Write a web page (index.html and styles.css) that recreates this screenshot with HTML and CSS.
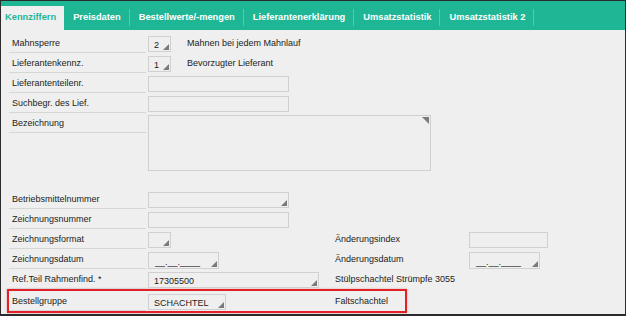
FILE: index.html
```html
<!DOCTYPE html>
<html lang="de">
<head>
    <meta charset="UTF-8">
    <title>Kennziffern</title>
    <link rel="stylesheet" href="styles.css">
</head>
<body>
    <div class="frame">
        <!-- Reiter -->
        <div class="tabs">
            <div class="tab active">Kennziffern</div>
            <div class="tab">Preisdaten</div>
            <div class="tab">Bestellwerte/-mengen</div>
            <div class="tab">Lieferantenerklärung</div>
            <div class="tab">Umsatzstatistik</div>
            <div class="tab">Umsatzstatistik 2</div>
        </div>

        <!-- Formular -->
        <div class="form">
            <div class="row">
                <div class="lbl">Mahnsperre</div>
                <div class="fld">
                    <div class="box sel w-xs">2</div>
                    <span class="txt">Mahnen bei jedem Mahnlauf</span>
                </div>
            </div>
            <div class="row">
                <div class="lbl">Lieferantenkennz.</div>
                <div class="fld">
                    <div class="box sel w-xs">1</div>
                    <span class="txt">Bevorzugter Lieferant</span>
                </div>
            </div>
            <div class="row">
                <div class="lbl">Lieferantenteilenr.</div>
                <div class="fld"><div class="box w-md"></div></div>
            </div>
            <div class="row">
                <div class="lbl">Suchbegr. des Lief.</div>
                <div class="fld"><div class="box w-md"></div></div>
            </div>
            <div class="row tall">
                <div class="lbl">Bezeichnung</div>
                <div class="fld"><div class="box area"></div></div>
            </div>
            <div class="row">
                <div class="lbl">Betriebsmittelnummer</div>
                <div class="fld"><div class="box sel w-md"></div></div>
            </div>
            <div class="row">
                <div class="lbl">Zeichnungsnummer</div>
                <div class="fld"><div class="box w-md"></div></div>
            </div>
            <div class="row">
                <div class="lbl">Zeichnungsformat</div>
                <div class="fld"><div class="box sel w-xs"></div></div>
                <div class="rlbl">Änderungsindex</div>
                <div class="rfld"><div class="box w-idx"></div></div>
            </div>
            <div class="row">
                <div class="lbl">Zeichnungsdatum</div>
                <div class="fld"><div class="box sel date w-date">__.__.____</div></div>
                <div class="rlbl">Änderungsdatum</div>
                <div class="rfld"><div class="box sel date w-date">__.__.____</div></div>
            </div>
            <div class="row">
                <div class="lbl">Ref.Teil Rahmenfind. *</div>
                <div class="fld"><div class="box sel w-lg">17305500</div></div>
                <div class="rtxt">Stülpschachtel Strümpfe 3055</div>
            </div>
            <div class="highlight">
                <div class="row">
                    <div class="lbl">Bestellgruppe</div>
                    <div class="fld"><div class="box sel w-grp">SCHACHTEL</div></div>
                    <div class="rtxt">Faltschachtel</div>
                </div>
            </div>
        </div>
    </div>
</body>
</html>
```

FILE: styles.css
```css
body {
    margin: 0;
    padding: 0;
    background-color: #fff;
    font-family: "Liberation Sans", Arial, sans-serif;
    font-size: 9px;
    color: #222;
}
.frame {
    width: 624px;
    height: 313px;
    border: 1px solid #2b2b2b;
    border-bottom-width: 2px;
    background-color: #efefef;
    overflow: hidden;
}
.tabs {
    display: flex;
    align-items: flex-end;
    height: 29px;
    background-color: #1fb696;
}
.tab {
    height: 24px;
    line-height: 23px;
    padding: 0 9px 0 9px;
    font-size: 9.3px;
    color: #fff;
    font-weight: bold;
    position: relative;
}
.tab::after {
    content: "";
    position: absolute;
    right: 0;
    top: 3px;
    bottom: 4px;
    border-right: 1px solid #56c9b0;
}
.tab.active {
    padding: 0 8px 0 4px;
    background-color: #efefef;
    color: #1fb696;
}
.tab.active::after {
    display: none;
}
.form {
    padding: 3px 0 0 8px;
}
.row {
    display: flex;
    height: 20px;
}
.row.tall {
    height: 76px;
}
.lbl {
    flex-shrink: 0;
    width: 134px;
    height: 19px;
    padding-left: 3px;
    line-height: 21px;
    border-bottom: 1px solid #d6d6d6;
}
.fld {
    flex-shrink: 0;
    width: 187px;
    margin-left: 2px;
    display: flex;
    align-items: flex-start;
}
.txt {
    margin-left: 16px;
    line-height: 20px;
}
.rlbl {
    width: 134px;
    height: 19px;
    line-height: 21px;
}
.rtxt {
    line-height: 21px;
}
.box {
    position: relative;
    flex-shrink: 0;
    box-sizing: border-box;
    height: 16px;
    margin-top: 3px;
    padding-left: 5px;
    line-height: 16px;
    border: 1px solid #d0d0d0;
    background-color: #efefef;
}
.box.sel::after {
    content: "";
    position: absolute;
    right: 1px;
    bottom: 1px;
    border-left: 6px solid transparent;
    border-bottom: 6px solid #7a7a7a;
}
.box.date {
    height: 17px;
    line-height: 19px;
    padding-left: 6px;
}
.box.area {
    width: 283px;
    height: 56px;
    margin-top: 2px;
}
.box.area::after {
    content: "";
    position: absolute;
    right: 1px;
    top: 1px;
    border-left: 7px solid transparent;
    border-top: 7px solid #7a7a7a;
}
.w-xs { width: 23px; }
.w-md { width: 141px; }
.w-lg { width: 171px; }
.w-date { width: 71px; }
.w-idx { width: 79px; }
.w-grp { width: 78px; }
.highlight {
    width: 396px;
    margin-left: -2px;
    border: 2px solid #e02128;
    box-shadow: 0 0 2px rgba(224, 33, 40, 0.4);
}
```
